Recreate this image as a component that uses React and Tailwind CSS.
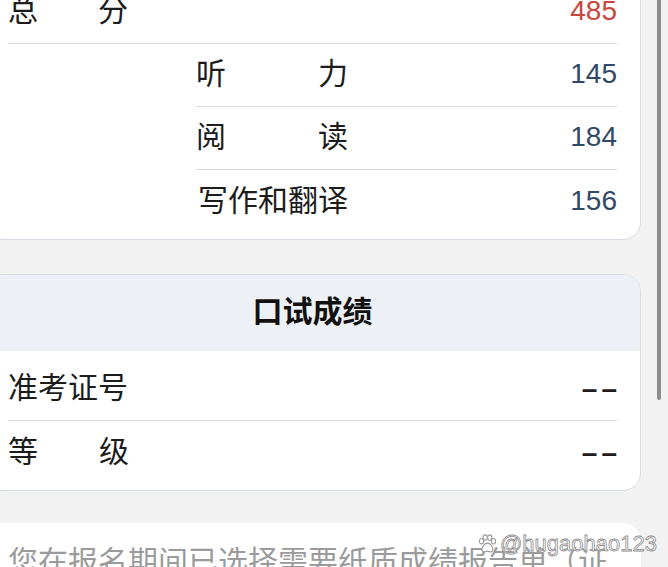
const cjk = { fontFamily: '"Noto Sans CJK SC", "Noto Sans", sans-serif' };
const num = { fontFamily: '"Liberation Sans", Arial, sans-serif' };

const Label = ({ text, width }) => (
  <div className={`flex justify-between mb-[7px] ${width}`}>
    {text.split('').map((c, i) => (
      <span key={i}>{c}</span>
    ))}
  </div>
);

const scoreRows = [
  { label: '听力', value: 145, justify: true },
  { label: '阅读', value: 184, justify: true },
  { label: '写作和翻译', value: 156, justify: false },
];

const Paw = () => (
  <svg width="22" height="22" viewBox="0 0 24 24" fill="white" stroke="#9a9a9a" strokeWidth="1.2">
    <ellipse cx="6" cy="9" rx="2.3" ry="3" />
    <ellipse cx="10" cy="5" rx="2.3" ry="3" />
    <ellipse cx="15" cy="5" rx="2.3" ry="3" />
    <ellipse cx="19" cy="9" rx="2.3" ry="3" />
    <path d="M12.5 11c-3 0-6 4-6 7 0 2 2 3 3.5 2.5 1.5-.5 3.5-.5 5 0 1.5.5 3.5-.5 3.5-2.5 0-3-3-7-6-7z" />
  </svg>
);

export default function App() {
  return (
    <div className="relative w-[668px] h-[567px] overflow-hidden bg-[#f2f2f2] text-[#1c1c1c]" style={cjk}>
      <div className="flex flex-col">
        {/* 笔试成绩 */}
        <div className="ml-[-16px] w-[657px] -mt-[20px] bg-white border border-[#d6dce4] rounded-b-[18px] pl-[23px] pr-[23px] pb-[6px]">
          <div className="h-[63px] flex items-center justify-between border-b border-[#dadada] text-[30px]">
            <Label text="总分" width="w-[120px]" />
            <span className="text-[28px] text-[#c9463d] mb-[2px]" style={num}>485</span>
          </div>
          <div className="ml-[188px]">
            {scoreRows.map((row, i) => (
              <div
                key={row.label}
                className={`h-[63px] flex items-center justify-between text-[30px] ${i < scoreRows.length - 1 ? 'border-b border-[#dadada]' : ''}`}
              >
                {row.justify ? (
                  <Label text={row.label} width="w-[152px]" />
                ) : (
                  <span className="pl-[2px] mb-[7px]">{row.label}</span>
                )}
                <span className="text-[28px] text-[#2f4a68] mb-[2px]" style={num}>{row.value}</span>
              </div>
            ))}
          </div>
        </div>

        {/* 口试成绩 */}
        <div className="ml-[-16px] w-[657px] mt-[34px] bg-white border border-[#d6dce4] rounded-[18px] overflow-hidden">
          <div className="h-[76px] bg-[#edf0f5] flex items-center justify-center text-[30px] font-bold text-[#111]">
            <span className="mb-[8px]">口试成绩</span>
          </div>
          <div className="pl-[23px] pr-[23px] pt-[7px] pb-[6px]">
            <div className="h-[63px] flex items-center justify-between border-b border-[#dadada] text-[30px]">
              <span className="mb-[7px]">准考证号</span>
              <span className="text-[28px] font-bold tracking-[4px] -mr-[4px]" style={num}>––</span>
            </div>
            <div className="h-[63px] flex items-center justify-between text-[30px]">
              <Label text="等级" width="w-[121px]" />
              <span className="text-[28px] font-bold tracking-[4px] -mr-[4px]" style={num}>––</span>
            </div>
          </div>
        </div>

        {/* 提示 */}
        <div className="ml-[-16px] w-[657px] mt-[32px] h-[120px] bg-white rounded-t-[18px] pl-[24px] pt-[14px]">
          <p className="text-[30px] text-[#9b9b9b] whitespace-nowrap">您在报名期间已选择需要纸质成绩报告单（证</p>
        </div>
      </div>

      {/* scrollbar */}
      <div className="absolute left-[657px] top-0 w-[4px] h-[400px] rounded-b-full bg-[#8c8c8c]" />

      {/* watermark */}
      <div className="absolute left-[476px] top-[527px] flex items-center gap-[2px]">
        <Paw />
        <span
          className="text-[22px] text-white"
          style={{ ...num, WebkitTextStroke: '0.8px #8d8d8d' }}
        >
          @hugaohao123
        </span>
      </div>
    </div>
  );
}
